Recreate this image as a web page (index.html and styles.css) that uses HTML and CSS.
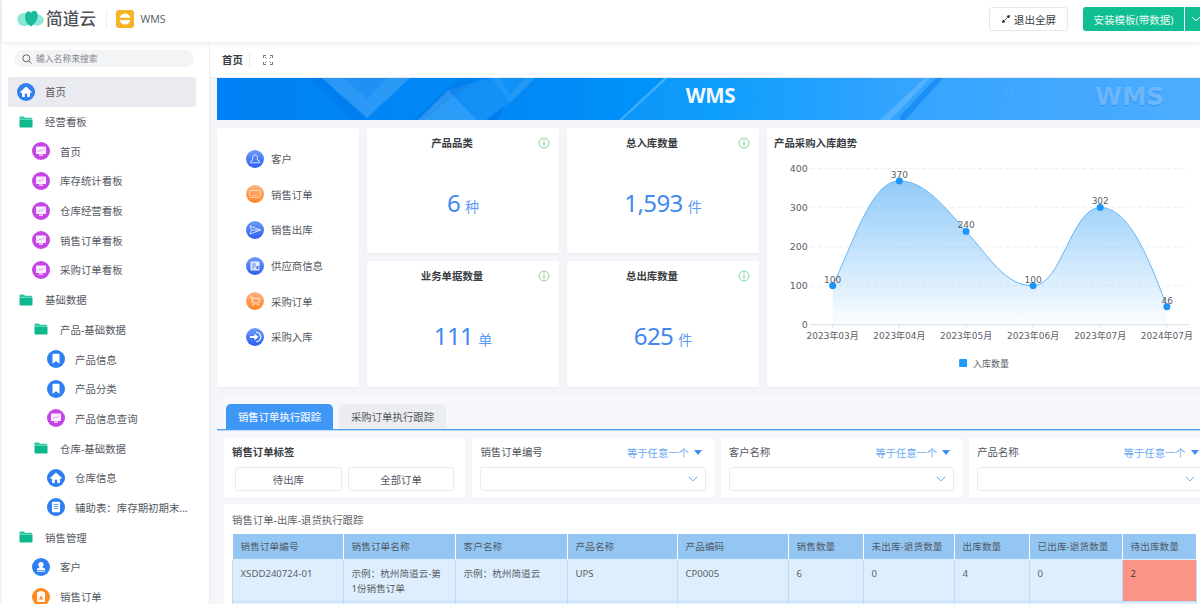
FILE: index.html
```html
<!DOCTYPE html>
<html lang="zh-CN">
<head>
<meta charset="utf-8">
<title>WMS</title>
<link rel="stylesheet" href="styles.css">
</head>
<body>
<svg class="defs" width="0" height="0" aria-hidden="true">
  <symbol id="g-home" viewBox="0 0 18 18"><path d="M9 3.6 3.4 8.8c-.4.4-.1 1 .4 1H5v3.4c0 .5.3.8.8.8h2V10.800h2.400V14h2c.5 0 .8-.3.8-.8V9.800h1.200c.5 0 .8-.6.4-1z" fill="#fff"/></symbol>
  <symbol id="g-board" viewBox="0 0 18 18"><rect x="4" y="4.500" width="10" height="7.500" rx=".8" fill="#fff" fill-opacity=".92"/><rect x="7" y="12.500" width="4" height="1.200" fill="#fff"/><path d="M5.800 10 8 8l1.400 1 2.800-2.600" fill="none" stroke="#d88bee" stroke-width=".9"/></symbol>
  <symbol id="g-mark" viewBox="0 0 18 18"><path d="M5.500 4.500c0-.4.300-.7.700-.7h5.600c.4 0 .7.300.7.700v9.200L9 11.200l-3.500 2.500z" fill="#fff"/></symbol>
  <symbol id="g-doc" viewBox="0 0 18 18"><rect x="5" y="3.800" width="8" height="10.400" rx=".8" fill="#fff"/><path d="M6.600 6.500h4.800M6.600 8.500h4.800M6.600 10.500h4.800" stroke="#2f7ff0" stroke-width=".7"/></symbol>
  <symbol id="g-user" viewBox="0 0 18 18"><circle cx="9" cy="6.500" r="2.600" fill="#fff"/><path d="M7.600 8.500h2.800l.6 1.700h2v1.800H5v-1.800h2z" fill="#fff"/><rect x="5" y="12.700" width="8" height="1" fill="#fff"/></symbol>
  <symbol id="g-order" viewBox="0 0 18 18"><rect x="5" y="4" width="8" height="10" rx=".8" fill="#fff" fill-opacity=".95"/><rect x="7" y="3.200" width="4" height="1.800" fill="#fff"/><path d="M9 7.500 7 11.500h4z" fill="#ff8a1f"/></symbol>
  <symbol id="g-people" viewBox="0 0 18 18"><path d="M6.500 12.800h-2l.5-2 1.800-1c-.6-2.800 0-5 2.200-5s2.800 2.200 2.200 5l1.800 1 .5 2h-2.200M6.800 12.800h4.400" fill="none" stroke="#fff" stroke-opacity=".85" stroke-width=".9"/></symbol>
  <symbol id="g-kbd" viewBox="0 0 18 18"><rect x="3.800" y="5.500" width="10.400" height="7" rx="1" fill="none" stroke="#fff" stroke-opacity=".7" stroke-width=".8"/><path d="M5.500 10.500h7" stroke="#fff" stroke-opacity=".7" stroke-dasharray="1 .8"/></symbol>
  <symbol id="g-send" viewBox="0 0 18 18"><path d="m4 5 10.500 4L4 13l1.500-4zM5.500 9h9" fill="none" stroke="#fff" stroke-opacity=".85" stroke-width=".9"/></symbol>
  <symbol id="g-sup" viewBox="0 0 18 18"><rect x="4.500" y="4.500" width="9" height="9" rx="1" fill="#fff" fill-opacity=".85"/><path d="M6 7h4M6 9h4M6 11h2.500" stroke="#3f6ff2" stroke-width=".8"/><rect x="10.500" y="9" width="2" height="3" fill="#3f6ff2"/></symbol>
  <symbol id="g-cart" viewBox="0 0 18 18"><path d="M4 5h1.800l1 6h6l1-4.500H6.100" fill="none" stroke="#fff" stroke-opacity=".85" stroke-width=".9"/><circle cx="7.500" cy="12.800" r=".8" fill="#fff"/><circle cx="12" cy="12.800" r=".8" fill="#fff"/></symbol>
  <symbol id="g-in" viewBox="0 0 18 18"><path d="M10 4.200a4.800 4.800 0 1 1 0 9.600" fill="none" stroke="#fff" stroke-width="1.100"/><path d="M4 8h4.500V5.800L12.500 9l-4 3.200V10H4z" fill="#fff"/></symbol>
  <symbol id="g-folder" viewBox="0 0 14 12"><path d="M.5 1.200C.5.700.8.400 1.300.400h3.400l1.400 1.400h6.200c.5 0 .8.300.8.800v.6H.5z" fill="#29c9a3"/><path d="M.5 3.400h13v7c0 .6-.4 1-1 1h-11c-.6 0-1-.4-1-1z" fill="#0fb78f"/></symbol>
  <symbol id="g-chev" viewBox="0 0 10 6"><path d="m.8.800 4.200 4 4.200-4" fill="none" stroke="currentColor" stroke-width="1"/></symbol>
  <symbol id="g-info" viewBox="0 0 12 12"><circle cx="6" cy="6" r="5" fill="none" stroke="#82d696" stroke-width="1"/><path d="M6 5.200v3.600" stroke="#62c47b" stroke-width="1"/><circle cx="6" cy="3.500" r=".7" fill="#62c47b"/></symbol>
</svg>

<div class="app">
  <header class="topbar">
    <div class="brand">
      <svg class="logo" width="27" height="20" viewBox="0 0 27 20">
        <ellipse cx="7.500" cy="11.500" rx="7.300" ry="6.800" fill="#8be8d5"/>
        <ellipse cx="19.500" cy="12" rx="7.300" ry="5.800" fill="#8be8d5"/>
        <path d="M14 18.500C9.500 15.500 7.500 12.500 8.200 7.500 8.800 3 12.300 1.800 14 5c1.700-3.400 6.200-2.600 6.700 1.500.5 5-2.500 8.800-6.700 12z" fill="#1cb99a"/>
      </svg>
      <span class="brand-name">简道云</span>
      <span class="vline"></span>
      <span class="app-icon"><svg width="12" height="12" viewBox="0 0 12 12"><circle cx="6" cy="6" r="5.500" fill="#fff"/><rect x="0" y="4.800" width="12" height="2.400" fill="#f5b325"/></svg></span>
      <span class="app-name">WMS</span>
    </div>
    <div class="actions">
      <button class="btn-exit"><svg width="8" height="8" viewBox="0 0 8 8"><path d="M7.500.5 5 1.200 6.800 3zM.5 7.500 3 6.800 1.200 5zM2.500 5.500l3-3" fill="#222" stroke="#222" stroke-width=".8"/></svg>退出全屏</button>
      <button class="btn-install">安装模板(带数据)</button>
      <button class="btn-more"><svg width="10" height="6"><use href="#g-chev"/></svg></button>
    </div>
  </header>

  <div class="body">
    <aside class="sidebar">
      <div class="search">
        <svg width="10" height="10" viewBox="0 0 10 10"><circle cx="4.300" cy="4.300" r="3.500" fill="none" stroke="#666" stroke-width="1"/><path d="m7 7 2.500 2.500" stroke="#666" stroke-width="1"/></svg>
        <span>输入名称来搜索</span>
      </div>
      <nav class="tree">
        <a class="row lv0 active"><span class="ic blue"><svg><use href="#g-home"/></svg></span><span class="lbl">首页</span></a>
        <a class="row lv0"><span class="fold"><svg><use href="#g-folder"/></svg></span><span class="lbl">经营看板</span></a>
        <a class="row lv1"><span class="ic purple"><svg><use href="#g-board"/></svg></span><span class="lbl">首页</span></a>
        <a class="row lv1"><span class="ic purple"><svg><use href="#g-board"/></svg></span><span class="lbl">库存统计看板</span></a>
        <a class="row lv1"><span class="ic purple"><svg><use href="#g-board"/></svg></span><span class="lbl">仓库经营看板</span></a>
        <a class="row lv1"><span class="ic purple"><svg><use href="#g-board"/></svg></span><span class="lbl">销售订单看板</span></a>
        <a class="row lv1"><span class="ic purple"><svg><use href="#g-board"/></svg></span><span class="lbl">采购订单看板</span></a>
        <a class="row lv0"><span class="fold"><svg><use href="#g-folder"/></svg></span><span class="lbl">基础数据</span></a>
        <a class="row lv1"><span class="fold"><svg><use href="#g-folder"/></svg></span><span class="lbl">产品-基础数据</span></a>
        <a class="row lv2"><span class="ic blue"><svg><use href="#g-mark"/></svg></span><span class="lbl">产品信息</span></a>
        <a class="row lv2"><span class="ic blue"><svg><use href="#g-mark"/></svg></span><span class="lbl">产品分类</span></a>
        <a class="row lv2"><span class="ic purple"><svg><use href="#g-board"/></svg></span><span class="lbl">产品信息查询</span></a>
        <a class="row lv1"><span class="fold"><svg><use href="#g-folder"/></svg></span><span class="lbl">仓库-基础数据</span></a>
        <a class="row lv2"><span class="ic blue"><svg><use href="#g-home"/></svg></span><span class="lbl">仓库信息</span></a>
        <a class="row lv2"><span class="ic blue"><svg><use href="#g-doc"/></svg></span><span class="lbl">辅助表：库存期初期末...</span></a>
        <a class="row lv0"><span class="fold"><svg><use href="#g-folder"/></svg></span><span class="lbl">销售管理</span></a>
        <a class="row lv1"><span class="ic blue"><svg><use href="#g-user"/></svg></span><span class="lbl">客户</span></a>
        <a class="row lv1"><span class="ic orange"><svg><use href="#g-order"/></svg></span><span class="lbl">销售订单</span></a>
      </nav>
    </aside>

    <main class="main">
      <div class="pagetabs">
        <span class="pagetab">首页</span>
        <span class="pt-line"></span>
        <svg class="pt-full" width="10" height="10" viewBox="0 0 10 10"><path d="M.5 3V.5H3M7 .5h2.500V3M9.500 7v2.500H7M3 9.500H.5V7M2 2l1.500 1.500M8 2 6.500 3.500M8 8 6.500 6.500M2 8l1.500-1.500" fill="none" stroke="#666" stroke-width=".9"/></svg>
      </div>

      <div class="content">
        <div class="banner">
          <svg class="banner-art" viewBox="217 78 983 42" preserveAspectRatio="none">
            <polygon points="308,78 352,120 367,120 322,78" fill="#0062d8" fill-opacity=".18"/>
            <polygon points="322,78 367,118 410,78" fill="#fff" fill-opacity=".17"/>
            <polygon points="344,78 367,99 387,78" fill="#0a7cf0" fill-opacity=".3"/>
            <polygon points="413,120 450,86 460,78 478,78 423,120" fill="#0062d8" fill-opacity=".25"/>
            <polygon points="418,120 448,90 477,120" fill="#fff" fill-opacity=".17"/>
            <polygon points="448,90 490,78 535,78 510,103 486,120 477,120" fill="#fff" fill-opacity=".07"/>
            <polygon points="492,78 510,103 535,78 525,78 510,95 500,78" fill="#fff" fill-opacity=".07"/>
            <polygon points="486,120 505,105 497,120" fill="#0062d8" fill-opacity=".3"/>
            <polygon points="619,120 664,78 668,78 622,120" fill="#fff" fill-opacity=".25"/>
            <polygon points="622,120 668,78 1200,78 1200,120" fill="#fff" fill-opacity=".05"/>
            <polyline points="745,78 770,98 745,120" fill="none" stroke="#fff" stroke-opacity=".07"/>
            <polygon points="900,116 936,78 943,78 905,120 900,120" fill="#0a80f0" fill-opacity=".6"/>
            <polygon points="880,120 925,78 930,78 890,120" fill="#fff" fill-opacity=".16"/>
            <circle cx="1008" cy="92" r="8" fill="none" stroke="#1c8ff2" stroke-opacity=".6" stroke-dasharray="1 2"/>
          </svg>
          <span class="banner-title">WMS</span>
          <span class="banner-ghost">WMS</span>
        </div>

        <div class="dash">
          <div class="card quick">
            <a class="quick-item"><span class="ic g-blue"><svg><use href="#g-people"/></svg></span>客户</a>
            <a class="quick-item"><span class="ic g-orange"><svg><use href="#g-kbd"/></svg></span>销售订单</a>
            <a class="quick-item"><span class="ic g-blue"><svg><use href="#g-send"/></svg></span>销售出库</a>
            <a class="quick-item"><span class="ic g-blue"><svg><use href="#g-sup"/></svg></span>供应商信息</a>
            <a class="quick-item"><span class="ic g-orange"><svg><use href="#g-cart"/></svg></span>采购订单</a>
            <a class="quick-item"><span class="ic g-blue"><svg><use href="#g-in"/></svg></span>采购入库</a>
          </div>
          <div class="card stat">
            <div class="stat-head"><span class="stat-title">产品品类</span><svg class="info"><use href="#g-info"/></svg></div>
            <div class="stat-val">6<small>种</small></div>
          </div>
          <div class="card stat">
            <div class="stat-head"><span class="stat-title">总入库数量</span><svg class="info"><use href="#g-info"/></svg></div>
            <div class="stat-val">1,593<small>件</small></div>
          </div>
          <div class="card trend">
            <div class="trend-title">产品采购入库趋势</div>
            <svg class="chart" viewBox="767 158 433 230">
              <defs>
                <linearGradient id="area" x1="0" y1="0" x2="0" y2="1">
                  <stop offset="0" stop-color="#2b9bf4" stop-opacity=".52"/>
                  <stop offset="1" stop-color="#2b9bf4" stop-opacity=".02"/>
                </linearGradient>
              </defs>
              <g class="grid">
                <line x1="810" x2="1190" y1="168.500" y2="168.500"/>
                <line x1="810" x2="1190" y1="207.500" y2="207.500"/>
                <line x1="810" x2="1190" y1="247.500" y2="247.500"/>
                <line x1="810" x2="1190" y1="286.500" y2="286.500"/>
              </g>
              <path d="M832 286.300C856 235 872 181 899 181C925 181 945 208 966 231.700C990 258 1005 286.300 1033.300 286.300C1062 286.300 1072 207.700 1100.700 207.700C1130 207.700 1150 260 1167.700 307.300V325.300H832Z" fill="url(#area)"/>
              <path d="M832 286.300C856 235 872 181 899 181C925 181 945 208 966 231.700C990 258 1005 286.300 1033.300 286.300C1062 286.300 1072 207.700 1100.700 207.700C1130 207.700 1150 260 1167.700 307.300" fill="none" stroke="#62b4f6" stroke-width="1"/>
              <path class="axis" d="M810 325.500H1190M832 325.500v3M899 325.500v3M966 325.500v3M1033.500 325.500v3M1100.500 325.500v3M1167.500 325.500v3"/>
              <g class="dots">
                <circle cx="832" cy="286.300" r="3.500"/><circle cx="899" cy="181" r="3.500"/><circle cx="966" cy="231.700" r="3.500"/>
                <circle cx="1033.300" cy="286.300" r="3.500"/><circle cx="1100.700" cy="207.700" r="3.500"/><circle cx="1167.700" cy="307.300" r="3.500"/>
              </g>
              <g class="ylab">
                <text x="807" y="172">400</text><text x="807" y="211">300</text><text x="807" y="250.500">200</text><text x="807" y="289.500">100</text><text x="807" y="328.500">0</text>
              </g>
              <g class="xlab">
                <text x="832" y="340">2023年03月</text><text x="899" y="340">2023年04月</text><text x="966" y="340">2023年05月</text>
                <text x="1033.300" y="340">2023年06月</text><text x="1100.700" y="340">2023年07月</text><text x="1167.700" y="340">2024年07月</text>
              </g>
              <g class="xlab">
                <text x="832" y="283.500">100</text><text x="899" y="178">370</text><text x="966" y="228">240</text>
                <text x="1033.300" y="283.500">100</text><text x="1100.700" y="204.500">302</text><text x="1168" y="304.500">46</text>
              </g>
              <rect x="959" y="360" width="8" height="8" rx="1" fill="#1e9bff"/>
              <text class="legend" x="973" y="367.500">入库数量</text>
            </svg>
          </div>
          <div class="card stat">
            <div class="stat-head"><span class="stat-title">业务单据数量</span><svg class="info"><use href="#g-info"/></svg></div>
            <div class="stat-val">111<small>单</small></div>
          </div>
          <div class="card stat">
            <div class="stat-head"><span class="stat-title">总出库数量</span><svg class="info"><use href="#g-info"/></svg></div>
            <div class="stat-val">625<small>件</small></div>
          </div>
        </div>

        <section class="tracker">
          <div class="tabs">
            <span class="tab on">销售订单执行跟踪</span>
            <span class="tab">采购订单执行跟踪</span>
          </div>
          <div class="filters">
            <div class="filter">
              <div class="f-label strong">销售订单标签</div>
              <div class="f-btns"><button class="f-btn">待出库</button><button class="f-btn">全部订单</button></div>
            </div>
            <div class="filter">
              <div class="f-head"><span class="f-label">销售订单编号</span><span class="f-op">等于任意一个<i class="caret"></i></span></div>
              <div class="f-select"><svg width="10" height="6"><use href="#g-chev"/></svg></div>
            </div>
            <div class="filter">
              <div class="f-head"><span class="f-label">客户名称</span><span class="f-op">等于任意一个<i class="caret"></i></span></div>
              <div class="f-select"><svg width="10" height="6"><use href="#g-chev"/></svg></div>
            </div>
            <div class="filter">
              <div class="f-head"><span class="f-label">产品名称</span><span class="f-op">等于任意一个<i class="caret"></i></span></div>
              <div class="f-select"><svg width="10" height="6"><use href="#g-chev"/></svg></div>
            </div>
          </div>
          <div class="tablecard">
            <div class="t-caption">销售订单-出库-退货执行跟踪</div>
            <table class="grid-table">
              <colgroup>
                <col class="c111"><col class="c112"><col class="c112"><col class="c110"><col class="c111"><col class="c75"><col class="c91"><col class="c75"><col class="c93"><col class="c74">
              </colgroup>
              <thead>
                <tr><th>销售订单编号</th><th>销售订单名称</th><th>客户名称</th><th>产品名称</th><th>产品编码</th><th>销售数量</th><th>未出库-退货数量</th><th>出库数量</th><th>已出库-退货数量</th><th>待出库数量</th></tr>
              </thead>
              <tbody>
                <tr><td>XSDD240724-01</td><td>示例：杭州简道云-第1份销售订单</td><td>示例：杭州简道云</td><td>UPS</td><td>CP0005</td><td>6</td><td>0</td><td>4</td><td>0</td><td class="warn">2</td></tr>
                <tr class="next"><td></td><td></td><td></td><td></td><td></td><td></td><td></td><td></td><td></td><td></td></tr>
              </tbody>
            </table>
          </div>
        </section>
      </div>
    </main>
  </div>
</div>
</body>
</html>
```

FILE: styles.css
```css
* { box-sizing: border-box; }
html, body { margin: 0; padding: 0; height: 100%; }
body {
  width: 1200px;
  height: 604px;
  overflow: hidden;
  background: #f3f5f9;
  font-family: "Noto Sans", "Noto Sans CJK SC", sans-serif;
  font-size: 10.4px;
  color: #555a62;
}
button { font: inherit; cursor: pointer; }
.defs { position: absolute; }

.app { display: flex; flex-direction: column; height: 604px; padding-left: 2px; }

/* top bar */
.topbar {
  position: relative;
  z-index: 2;
  flex: none;
  height: 42px;
  display: flex;
  align-items: center;
  justify-content: space-between;
  background: #fff;
  box-shadow: 0 1px 5px rgba(40, 50, 70, .12);
  padding: 0 0 4px 15px;
}
.brand { display: flex; align-items: center; }
.logo { display: block; margin-top: -2px; }
.brand-name { margin-left: 2px; font-size: 16.6px; font-weight: 500; color: #4f5257; line-height: 20px; letter-spacing: .2px; }
.vline { width: 1px; height: 17px; background: #eceef1; margin: 0 9px 0 10px; }
.app-icon { width: 18px; height: 18px; border-radius: 3px; background: #f5b325; display: flex; align-items: center; justify-content: center; }
.app-name { margin-left: 6px; font-size: 10.6px; color: #63666b; }
.actions { display: flex; align-items: center; height: 24px; }
.btn-exit {
  width: 79px; height: 24px; margin-right: 15px;
  display: flex; align-items: center; justify-content: center; gap: 4px;
  background: #fff; border: 1px solid #e6e8ec; border-radius: 3px;
  color: #3a3d42; font-size: 10.6px; padding: 0 0 0 1px;
}
.btn-install {
  width: 101px; height: 24px; border: 0; padding: 0;
  background: #0fbe92; color: #e9fbf5; border-radius: 3px 0 0 3px; font-size: 10.5px;
}
.btn-more {
  width: 15px; height: 24px; margin-left: 1px; border: 0; padding: 0 0 0 6px;
  background: #0fbe92; color: #fff; display: flex; align-items: center; justify-content: flex-start; overflow: hidden;
}
.btn-more svg { flex: none; }

.body { flex: 1; display: flex; min-height: 0; }

/* sidebar */
.sidebar {
  flex: none;
  width: 208px;
  background: #fff;
  border-right: 1px solid #eceef2;
  padding: 8px 13px 0 6px;
  overflow: hidden;
}
.search {
  height: 17px;
  margin: 0 2px 10px 6px;
  border-radius: 9px;
  background: #f3f4f6;
  display: flex; align-items: center; gap: 4px;
  padding-left: 8px;
  font-size: 8.8px;
  color: #83878f;
}
.row { height: 29.7px; display: flex; align-items: center; gap: 10px; border-radius: 3px; color: #55585f; }
.row.active { background: #e9ebf0; }
.lv0 { padding-left: 9px; }
.lv1 { padding-left: 24px; }
.lv2 { padding-left: 39px; }
.lbl { min-width: 0; flex: 1; white-space: nowrap; letter-spacing: .05px; }
.ic { flex: none; width: 18px; height: 18px; border-radius: 50%; display: block; }
.ic svg { display: block; width: 18px; height: 18px; }
.fold { flex: none; width: 18px; height: 18px; display: flex; align-items: center; justify-content: center; }
.fold svg { width: 14px; height: 12px; display: block; }
.blue { background: #2f7ff0; }
.purple { background: #c645e6; }
.orange { background: #ff8a1f; }
.g-blue { background: linear-gradient(180deg, #6d9bf8, #2c5ff2); }
.g-orange { background: linear-gradient(180deg, #ffb382, #ff8726); }

/* main */
.main { flex: 1; min-width: 0; display: flex; flex-direction: column; overflow: hidden; }
.pagetabs {
  flex: none; height: 36px; background: #fff; border-bottom: 1px solid #e9ebef;
  display: flex; align-items: center; padding: 0 0 0 12px;
}
.pagetab { font-weight: 700; color: #3a3d42; }
.pt-line { width: 1px; height: 14px; background: #eceef1; margin: 0 13px 0 6px; }
.pt-full { display: block; }
.content { flex: 1; min-height: 0; width: 1010px; padding: 0 0 0 7px; }

.banner {
  position: relative;
  height: 42px;
  width: 983px;
  overflow: hidden;
  display: flex; align-items: center; justify-content: center;
  background: linear-gradient(90deg, #0080f4 0%, #008bf7 35%, #0098fb 50%, #2ba0ff 70%, #44a9ff 100%);
}
.banner-art { position: absolute; left: 0; top: 0; width: 100%; height: 100%; }
.banner-title { position: relative; margin-right: -4px; font-size: 20.5px; line-height: 34px; font-weight: 700; color: #f1f7ff; font-family: "Open Sans", sans-serif; margin-top: -8px; letter-spacing: -.3px; }
.banner-ghost { position: absolute; right: 36px; top: 5px; font-family: "DejaVu Sans", sans-serif; font-weight: 700; font-size: 24.5px; line-height: 28px; color: rgba(135, 198, 255, .7); text-shadow: 0 1px 1px rgba(20, 110, 210, .4); }

.dash {
  margin-top: 8px;
  display: grid;
  grid-template-columns: 142px 192px 192px 440px;
  grid-template-rows: 125px 126px;
  column-gap: 8px;
  row-gap: 8px;
  width: 1000px;
}
.card { background: #fff; box-shadow: 0 1px 2px rgba(60, 70, 90, .05); }
.quick { grid-row: 1 / 3; display: flex; flex-direction: column; padding: 13px 0 0 29px; }
.quick-item { height: 35.6px; display: flex; align-items: center; gap: 7px; flex: none; }
.stat { display: flex; flex-direction: column; align-items: stretch; }
.stat-head { position: relative; height: 28px; display: flex; align-items: center; justify-content: center; padding: 2px 22px 0 0; }
.stat-title { font-weight: 700; color: #3a3d42; line-height: 14px; }
.info { position: absolute; right: 9px; top: 9px; width: 12px; height: 12px; }
.stat-val { flex: 1; display: flex; align-items: baseline; justify-content: center; gap: 5px; padding-top: 27px; font-size: 24px; line-height: 40px; color: #3f88f3; letter-spacing: -.6px; }
.stat-val small { font-size: 14px; color: #5d9bf3; letter-spacing: 0; }

.trend { grid-column: 4; grid-row: 1 / 3; padding: 0; }
.trend-title { height: 30px; line-height: 30px; padding-left: 7px; font-weight: 700; color: #3a3d42; }
.chart { display: block; width: 433px; height: 229px; }
.grid line { stroke: #eef0f4; stroke-dasharray: 4 3; }
.axis { fill: none; stroke: #d9dee6; }
.dots circle { fill: #1c96fb; }
.chart text { font-family: "DejaVu Sans", "Noto Sans CJK SC", sans-serif; font-size: 9px; fill: #5a5e66; }
.ylab text { text-anchor: end; font-size: 9.500px; }
.xlab text { text-anchor: middle; }

/* tracker */
.tracker { margin: 9px 0 0; width: 1000px; background: #f5f7fa; padding-top: 8px; }
.tabs { display: flex; gap: 6px; padding-left: 9px; border-bottom: 1px solid #4a9df6; box-shadow: 0 1px 0 #bcdcfb; height: 26px; }
.tab { width: 107px; height: 25px; border-radius: 5px 5px 0 0; background: #ebedf0; display: flex; align-items: center; justify-content: center; color: #55585f; }
.tab.on { background: #3f97f5; color: #eaf4ff; font-weight: 500; }
.filters { display: grid; grid-template-columns: repeat(4, 241.4px); column-gap: 7px; margin: 8px 0 7px 7px; }
.filter { height: 59px; background: #fff; padding: 7px 8px 0; }
.f-label { line-height: 15px; color: #55585f; font-size: 10.400px; }
.f-label.strong { font-weight: 700; color: #3a3d42; }
.f-head { display: flex; justify-content: space-between; align-items: center; height: 15px; }
.f-op { color: #6aa9f5; font-size: 10.300px; display: flex; align-items: center; gap: 5px; padding-right: 4px; }
.caret { width: 0; height: 0; border: 4.500px solid transparent; border-top: 5px solid #3f8ef0; border-bottom: 0; }
.f-btns { display: flex; gap: 6px; margin: 7px 3px 0; }
.f-btn { width: 107px; height: 24px; background: #fff; border: 1px solid #e9ebef; border-radius: 3px; color: #55585f; padding: 0; }
.f-select { height: 24px; margin-top: 7px; border: 1px solid #e9ebef; border-radius: 3px; display: flex; align-items: center; justify-content: flex-end; padding-right: 7px; color: #6aa9f5; }
.tablecard { margin-left: 7px; background: #fff; height: 120px; padding: 8px 8px 0; }
.t-caption { height: 22px; line-height: 16px; color: #5f6369; font-size: 10.400px; }
.grid-table { border-collapse: collapse; table-layout: fixed; width: 964px; font-size: 9.600px; }
.c111 { width: 111px; } .c112 { width: 112px; } .c110 { width: 110px; } .c75 { width: 75px; }
.c91 { width: 91px; } .c93 { width: 93px; } .c74 { width: 74px; }
.grid-table th { height: 25px; background: #94c6f4; color: #4f5a66; font-weight: 400; text-align: left; padding: 0 7.500px; border: 1px solid #fff; border-width: 0 1px; white-space: nowrap; letter-spacing: .1px; }
.grid-table td { height: 42px; background: #deeefd; color: #5a5e66; vertical-align: top; padding: 6px 12px 0 7.500px; line-height: 15px; border: 1px solid #bcdcfc; border-top-color: #deeefd; word-break: break-all; }
.grid-table td.warn { background: #fb9387; color: #4d3a38; }
```
